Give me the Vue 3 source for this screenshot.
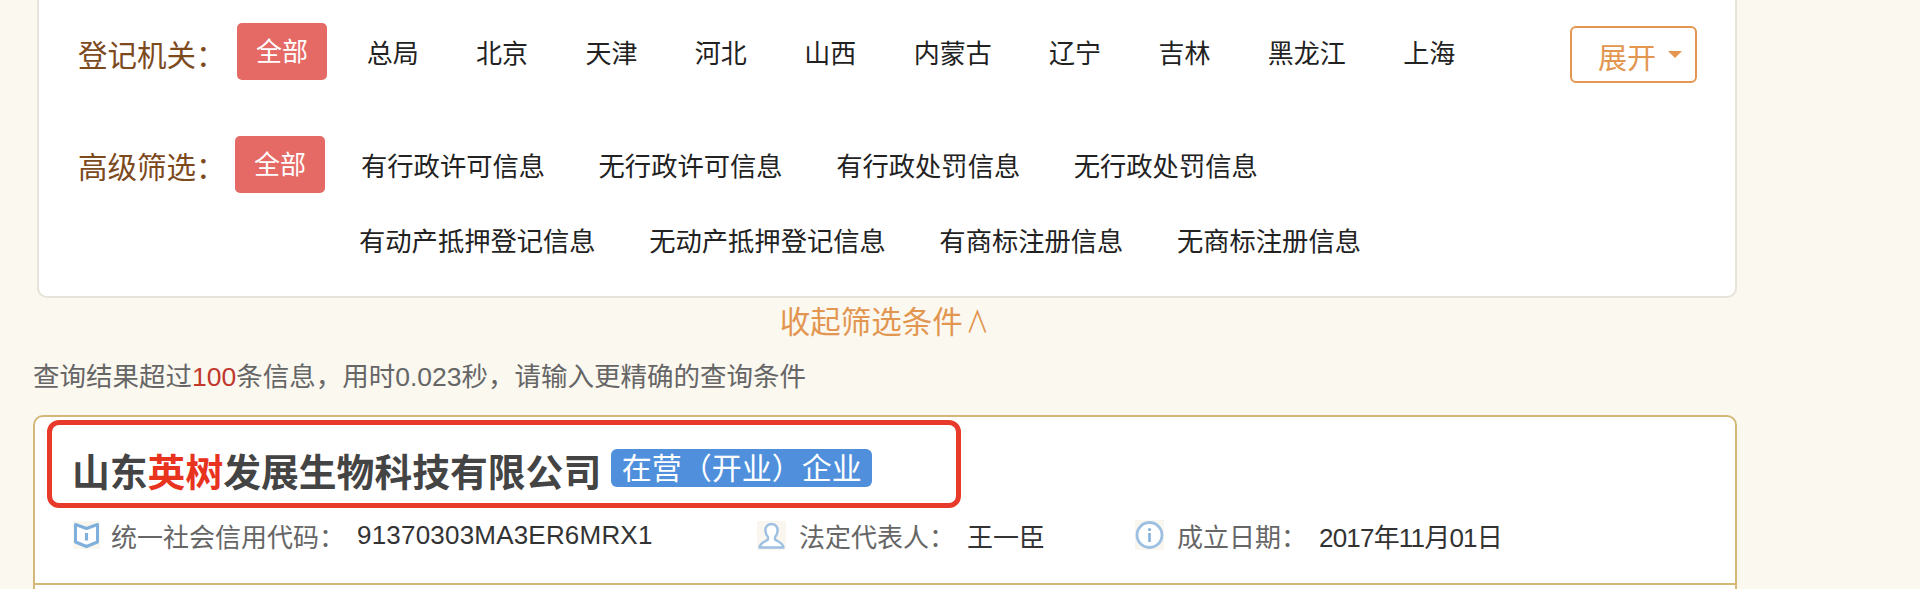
<template>
  <div class="page">
    <div class="filter-panel">
      <div class="filter-row">
        <div class="filter-label">登记机关：</div>
        <div class="all-btn">全部</div>
        <div class="region-list">
          <span v-for="name in regions" :key="name" class="region-item">{{ name }}</span>
        </div>
        <div class="expand-btn"><span class="expand-text">展开</span><i class="caret"></i></div>
      </div>
      <div class="filter-row advanced">
        <div class="filter-label short">高级筛选：</div>
        <div class="all-btn">全部</div>
        <div class="option-lines">
          <div v-for="(line, index) in optionLines" :key="index" class="option-line">
            <span v-for="name in line" :key="name" class="option-item">{{ name }}</span>
          </div>
        </div>
      </div>
    </div>

    <div class="collapse-link">收起筛选条件<span class="collapse-arrow">∧</span></div>

    <div class="result-tip">查询结果超过<span class="num">100</span>条信息，用时0.023秒，请输入更精确的查询条件</div>

    <div class="result-card">
      <div class="mark-box"></div>
      <div class="card-head">
        <div class="title-row">
          <span class="company">山东<em>英树</em>发展生物科技有限公司</span>
          <span class="status">在营（开业）企业</span>
        </div>
        <div class="info-row">
          <div class="info-item">
            <svg class="info-icon" width="27" height="28" viewBox="0 0 27 28">
              <rect width="27" height="28" fill="#f8f6ef" />
              <path d="M2.5 3.5 L13.5 7.5 L24.5 3.5 V21 L13.5 25.5 L2.5 21 Z" fill="#fff" stroke="#7fafdb" stroke-width="3" stroke-linejoin="round" />
              <path d="M13.5 12 V19.5" stroke="#7fafdb" stroke-width="3.2" />
            </svg>
            <span class="info-label">统一社会信用代码：</span>
            <span class="info-value code">91370303MA3ER6MRX1</span>
          </div>
          <div class="info-item">
            <svg class="info-icon wide" width="29" height="29" viewBox="0 0 29 29">
              <rect width="29" height="29" fill="#f8f6ef" />
              <path d="M14.5 3 c-4.5 0 -6.5 3.5 -6 7.5 c.3 2.5 1.5 4.5 2.5 5.5 v2.5 c-2 1.8 -8 2.8 -8.5 8 h24 c-.5 -5.2 -6.5 -6.2 -8.5 -8 v-2.5 c1 -1 2.2 -3 2.5 -5.5 c.5 -4 -1.5 -7.5 -6 -7.5 z" fill="#fff" stroke="#9dc0e2" stroke-width="2.4" stroke-linejoin="round" />
            </svg>
            <span class="info-label">法定代表人：</span>
            <span class="info-value">王一臣</span>
          </div>
          <div class="info-item">
            <svg class="info-icon wide" width="29" height="30" viewBox="0 0 29 30">
              <rect width="29" height="30" fill="#f8f6ef" />
              <circle cx="14.5" cy="15" r="12.5" fill="#fff" stroke="#9dc0e2" stroke-width="2.8" />
              <circle cx="14.5" cy="9.5" r="1.6" fill="#82b1dc" />
              <path d="M14.5 13 V22" stroke="#82b1dc" stroke-width="2.6" />
            </svg>
            <span class="info-label">成立日期：</span>
            <span class="info-value date">2017年11月01日</span>
          </div>
        </div>
      </div>
      <div class="card-body"></div>
    </div>
  </div>
</template>

<script setup>
const regions = ['总局', '北京', '天津', '河北', '山西', '内蒙古', '辽宁', '吉林', '黑龙江', '上海']

const optionLines = [
  ['有行政许可信息', '无行政许可信息', '有行政处罚信息', '无行政处罚信息'],
  ['有动产抵押登记信息', '无动产抵押登记信息', '有商标注册信息', '无商标注册信息']
]
</script>

<style>
html,
body {
  margin: 0;
  background: #fbf8f0;
}
</style>

<style scoped>
.page {
  height: 589px;
  overflow: hidden;
  padding-left: 33px;
  box-sizing: border-box;
  background: #fbf8f0;
  font-family: "Liberation Sans", "Noto Sans CJK SC", sans-serif;
}

.filter-panel {
  box-sizing: border-box;
  width: 1700px;
  height: 298px;
  margin-left: 4px;
  padding: 23px 38px 0 39px;
  background: #fff;
  border: 2px solid #e6e3da;
  border-top: 0;
  border-radius: 0 0 10px 10px;
}

.filter-row {
  display: flex;
  align-items: flex-start;
}

.advanced {
  margin-top: 53px;
}

.filter-label {
  width: 159px;
  height: 57px;
  padding-top: 4px;
  box-sizing: border-box;
  line-height: 57px;
  font-size: 29.5px;
  color: #7d4a1e;
  white-space: nowrap;
}

.filter-label.short {
  width: 157px;
  padding-top: 3px;
}

.all-btn {
  width: 90px;
  height: 57px;
  line-height: 58px;
  text-align: center;
  font-size: 26px;
  color: #fff;
  background: #e56a66;
  border-radius: 5px;
}

.region-list {
  display: flex;
  margin-left: 11px;
}

.region-item {
  padding: 3px 28.7px 0;
  line-height: 57px;
  font-size: 26px;
  color: #222;
  white-space: nowrap;
}

.expand-btn {
  display: flex;
  align-items: center;
  box-sizing: border-box;
  width: 127px;
  height: 57px;
  margin-top: 3px;
  margin-left: auto;
  padding-left: 26px;
  font-size: 29px;
  color: #e29650;
  border: 2px solid #e29650;
  border-radius: 6px;
}

.expand-text {
  padding-top: 3px;
}

.caret {
  margin-left: 12px;
  border-top: 7px solid #e29650;
  border-left: 7px solid transparent;
  border-right: 7px solid transparent;
}

.option-lines {
  margin-top: 3px;
  margin-left: 9px;
}

.option-line {
  display: flex;
  gap: 53.5px;
  padding: 0 27px;
  line-height: 57px;
  font-size: 26.3px;
  color: #222;
  white-space: nowrap;
}

.option-line + .option-line {
  margin-top: 18px;
  margin-left: -2px;
}

.collapse-link {
  width: 1702px;
  height: 47px;
  padding-left: 3px;
  box-sizing: border-box;
  line-height: 48px;
  text-align: center;
  font-size: 30.5px;
  color: #e29650;
}

.collapse-arrow {
  display: inline-block;
  margin-left: 3px;
  transform: scaleX(0.75);
  transform-origin: left center;
  margin-right: -5px;
}

.result-tip {
  height: 70px;
  line-height: 64px;
  font-size: 26.5px;
  color: #666;
}

.num {
  color: #c0392b;
}

.result-card {
  position: relative;
  box-sizing: border-box;
  width: 1704px;
  height: 260px;
  background: #fff;
  border: 2px solid #d3b877;
  border-radius: 10px 10px 0 0;
}

.mark-box {
  position: absolute;
  top: 3px;
  left: 12px;
  box-sizing: border-box;
  width: 914px;
  height: 88px;
  border: 5px solid #e83a2a;
  border-radius: 12px;
}

.card-head {
  box-sizing: border-box;
  height: 168px;
  padding: 30px 0 0 37px;
  border-bottom: 2px solid #d3b877;
}

.title-row {
  display: flex;
  align-items: center;
  height: 46px;
}

.company {
  margin-bottom: 2px;
  font-size: 37.8px;
  font-weight: 700;
  color: #444;
  white-space: nowrap;
}

.company em {
  font-style: normal;
  color: #e8331f;
}

.status {
  height: 38px;
  margin-left: 10px;
  margin-bottom: 4px;
  padding: 0 10.5px;
  line-height: 39px;
  font-size: 30px;
  color: #fff;
  background: #4f8fdc;
  border-radius: 6px;
  white-space: nowrap;
}

.info-row {
  display: grid;
  grid-template-columns: 684px 378px 1fr;
  margin-top: 22px;
  margin-left: 1px;
}

.info-item {
  display: flex;
  align-items: center;
  height: 40px;
  font-size: 26px;
  white-space: nowrap;
}

.info-icon {
  flex: none;
  margin-right: 11px;
}

.info-icon.wide {
  margin-right: 13px;
}

.info-label {
  margin-right: 12px;
  color: #666;
}

.info-value {
  color: #333;
}

.code {
  letter-spacing: 0.2px;
}

.date {
  letter-spacing: -0.8px;
}
</style>
